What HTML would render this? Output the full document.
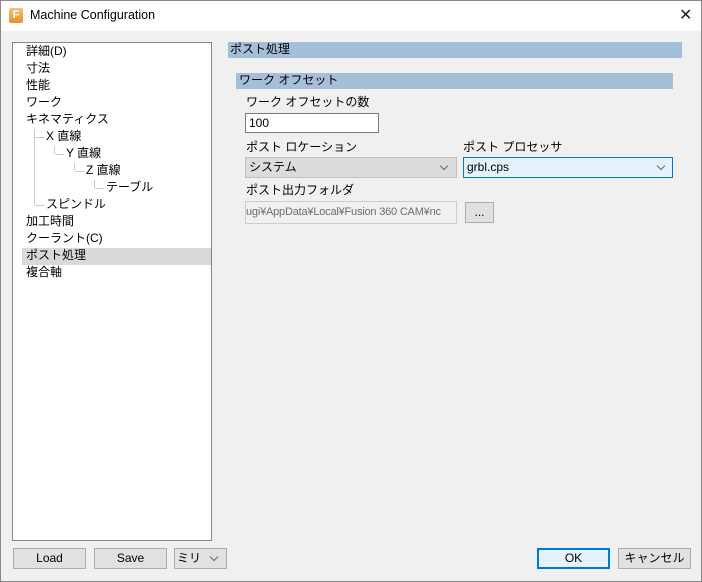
<!DOCTYPE html>
<html><head><meta charset="utf-8"><style>
*{box-sizing:border-box;margin:0;padding:0}
body{width:702px;height:582px;overflow:hidden;background:#f0f0f0;font-family:"Liberation Sans","Noto Sans CJK JP",sans-serif;font-size:12px;color:#000;position:relative}
.a{position:absolute;white-space:nowrap}
.win{position:absolute;left:0;top:0;width:702px;height:582px;border:1px solid #888}
.title{position:absolute;left:1px;top:1px;width:700px;height:30px;background:#fff}
.tree{position:absolute;left:12px;top:42px;width:200px;height:499px;background:#fff;border:1px solid #828790}
.ti{position:absolute;line-height:17px;height:17px}
.vl{position:absolute;border-left:1px solid #ccc;width:0}
.hl{position:absolute;border-top:1px solid #ccc;height:0}
.btn{position:absolute;background:#e1e1e1;border:1px solid #adadad;text-align:center;line-height:18px}
.chev{position:absolute;width:6px;height:6px;border-right:1px solid #666;border-bottom:1px solid #666;transform:rotate(45deg)}
</style></head><body>
<div class="win"></div>
<div class="title"></div>
<div class="a" style="left:9px;top:8px;width:14px;height:15px;background:linear-gradient(#f6c07a,#e8902e);border-radius:2px;color:#fff;font-weight:bold;font-size:11px;line-height:15px;text-align:center">F</div>
<div class="a" style="left:30px;top:8px;font-size:12.5px">Machine Configuration</div>
<div class="a" style="left:679px;top:5px;font-size:16px;color:#222">✕</div>

<div class="tree">
<div class="a" style="left:9px;top:205px;width:189px;height:17px;background:#d9d9d9"></div>
<div class="ti" style="left:13px;top:0">詳細(D)</div>
<div class="ti" style="left:13px;top:17px">寸法</div>
<div class="ti" style="left:13px;top:34px">性能</div>
<div class="ti" style="left:13px;top:51px">ワーク</div>
<div class="ti" style="left:13px;top:68px">キネマティクス</div>
<div class="ti" style="left:33px;top:85px">X 直線</div>
<div class="ti" style="left:53px;top:102px">Y 直線</div>
<div class="ti" style="left:73px;top:119px">Z 直線</div>
<div class="ti" style="left:93px;top:136px">テーブル</div>
<div class="ti" style="left:33px;top:153px">スピンドル</div>
<div class="ti" style="left:13px;top:170px">加工時間</div>
<div class="ti" style="left:13px;top:187px">クーラント(C)</div>
<div class="ti" style="left:13px;top:204px">ポスト処理</div>
<div class="ti" style="left:13px;top:221px">複合軸</div>
<div class="vl" style="left:21px;top:86px;height:76px"></div>
<div class="hl" style="left:22px;top:94px;width:9px"></div>
<div class="hl" style="left:22px;top:162px;width:9px"></div>
<div class="vl" style="left:41px;top:103px;height:8px"></div>
<div class="hl" style="left:42px;top:111px;width:9px"></div>
<div class="vl" style="left:61px;top:120px;height:8px"></div>
<div class="hl" style="left:62px;top:128px;width:9px"></div>
<div class="vl" style="left:81px;top:137px;height:8px"></div>
<div class="hl" style="left:82px;top:145px;width:9px"></div>
</div>

<div class="a" style="left:228px;top:42px;width:454px;height:16px;background:#a5bfd9;line-height:15px;padding-left:2px">ポスト処理</div>
<div class="a" style="left:236px;top:73px;width:437px;height:16px;background:#a5bfd9;line-height:15px;padding-left:3px">ワーク オフセット</div>
<div class="a" style="left:246px;top:93px">ワーク オフセットの数</div>
<div class="a" style="left:245px;top:113px;width:134px;height:20px;background:#fff;border:1px solid #7a7a7a;padding-left:3px;line-height:18px">100</div>
<div class="a" style="left:246px;top:138px">ポスト ロケーション</div>
<div class="a" style="left:463px;top:138px">ポスト プロセッサ</div>
<div class="a" style="left:245px;top:157px;width:212px;height:21px;background:#dcdcdc;border:1px solid #c0c0c0;padding-left:3px;line-height:19px">システム</div>
<div class="chev" style="left:441px;top:163px"></div>
<div class="a" style="left:463px;top:157px;width:210px;height:21px;background:#e5f1fb;border:1px solid #0078d7;padding-left:3px;line-height:19px">grbl.cps</div>
<div class="chev" style="left:658px;top:163px"></div>
<div class="a" style="left:246px;top:181px">ポスト出力フォルダ</div>
<div class="a" style="left:245px;top:201px;width:212px;height:23px;background:#f0f0f0;border:1px solid #ccc;color:#6d6d6d;line-height:21px;overflow:hidden;font-size:11px;letter-spacing:-0.2px">ugi¥AppData¥Local¥Fusion 360 CAM¥nc</div>
<div class="btn" style="left:465px;top:202px;width:29px;height:21px;background:#e1e1e1">...</div>

<div class="btn" style="left:13px;top:548px;width:73px;height:21px">Load</div>
<div class="btn" style="left:94px;top:548px;width:73px;height:21px">Save</div>
<div class="a" style="left:174px;top:548px;width:53px;height:21px;background:#e1e1e1;border:1px solid #adadad;padding-left:2px;line-height:19px">ミリ</div>
<div class="chev" style="left:211px;top:554px"></div>
<div class="btn" style="left:537px;top:548px;width:73px;height:21px;border:2px solid #0078d7;background:#e5f1fb;line-height:17px">OK</div>
<div class="btn" style="left:618px;top:548px;width:73px;height:21px">キャンセル</div>
</body></html>
